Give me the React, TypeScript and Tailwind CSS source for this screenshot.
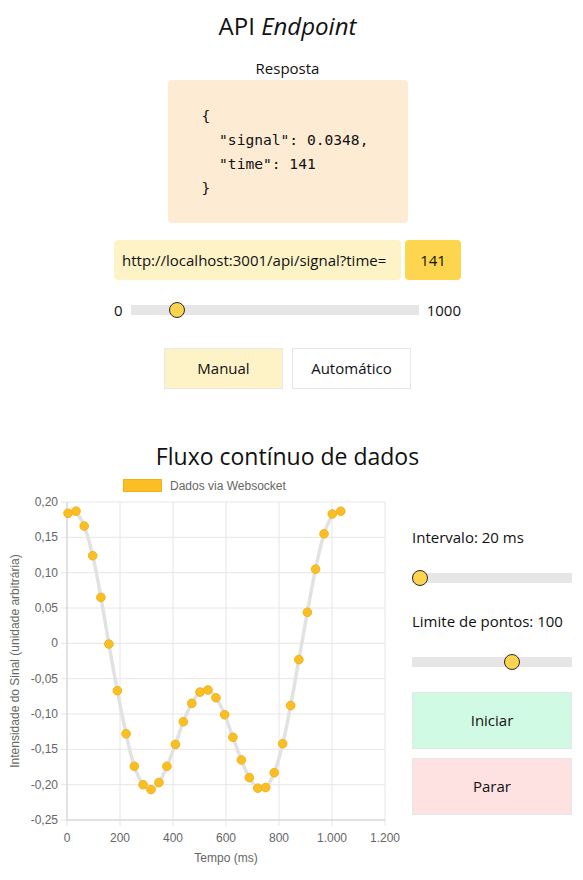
import React from 'react'

const sans = { fontFamily: '"Open Sans", "Noto Sans", sans-serif' }

const points: [number, number][] = [
  [4, 0.184], [34, 0.187], [65, 0.166], [97, 0.124], [128, 0.065], [158, -0.001],
  [190, -0.067], [223, -0.128], [254, -0.174], [287, -0.2], [317, -0.207], [347, -0.197],
  [377, -0.174], [409, -0.143], [439, -0.111], [471, -0.085], [502, -0.069], [532, -0.066],
  [562, -0.077], [595, -0.101], [626, -0.133], [658, -0.165], [688, -0.19], [720, -0.205],
  [750, -0.204], [782, -0.183], [814, -0.142], [844, -0.088], [875, -0.023], [907, 0.044],
  [938, 0.105], [970, 0.155], [1001, 0.183], [1033, 0.187],
]

const X0 = 67
const X1 = 385
const Y0 = 26 // 0.20
const Y1 = 344 // -0.25

const px = (t: number) => X0 + (t / 1200) * (X1 - X0)
const py = (v: number) => Y0 + ((0.2 - v) / 0.45) * (Y1 - Y0)

function smoothPath(pts: { x: number; y: number }[]) {
  const t = 0.4
  const cps = pts.map((cur, i) => {
    const prev = pts[i - 1] ?? cur
    const next = pts[i + 1] ?? cur
    const d01 = Math.hypot(cur.x - prev.x, cur.y - prev.y)
    const d12 = Math.hypot(next.x - cur.x, next.y - cur.y)
    const s01 = d01 + d12 === 0 ? 0 : d01 / (d01 + d12)
    const s12 = d01 + d12 === 0 ? 0 : d12 / (d01 + d12)
    return {
      p: { x: cur.x - t * s01 * (next.x - prev.x), y: cur.y - t * s01 * (next.y - prev.y) },
      n: { x: cur.x + t * s12 * (next.x - prev.x), y: cur.y + t * s12 * (next.y - prev.y) },
    }
  })
  let d = `M${pts[0].x},${pts[0].y}`
  for (let i = 1; i < pts.length; i++) {
    const a = cps[i - 1].n
    const b = cps[i].p
    d += ` C${a.x},${a.y} ${b.x},${b.y} ${pts[i].x},${pts[i].y}`
  }
  return d
}

const yTicks = ['0,20', '0,15', '0,10', '0,05', '0', '-0,05', '-0,10', '-0,15', '-0,20', '-0,25']
const xTicks = ['0', '200', '400', '600', '800', '1.000', '1.200']

function Chart() {
  const pts = points.map(([t, v]) => ({ x: px(t), y: py(v) }))
  const line = smoothPath(pts.slice(1, -1))
  const stepY = (Y1 - Y0) / 9
  const stepX = (X1 - X0) / 6
  return (
    <svg width="400" height="395" viewBox="0 0 400 395" className="block shrink-0">
      <g fontFamily='"Liberation Sans", Arial, sans-serif' fontSize="12" fill="#666">
        <rect x="123.5" y="3.5" width="38" height="12" fill="#fbbf24" stroke="#f0b116" strokeWidth="1" />
        <text x="170" y="14">Dados via Websocket</text>
        {yTicks.map((lab, i) => (
          <g key={lab}>
            <line x1="61" x2={X1} y1={Y0 + i * stepY} y2={Y0 + i * stepY} stroke="#e6e6e6" />
            <text x="58" y={Y0 + i * stepY + 4} textAnchor="end">{lab}</text>
          </g>
        ))}
        {xTicks.map((lab, i) => (
          <g key={lab}>
            <line x1={X0 + i * stepX} x2={X0 + i * stepX} y1={Y0} y2={Y1 + 6} stroke="#e6e6e6" />
            <text x={X0 + i * stepX} y={Y1 + 22} textAnchor="middle">{lab}</text>
          </g>
        ))}
        <line x1={X0} x2={X0} y1={Y0} y2={Y1} stroke="#d0d0d0" />
        <line x1={X0} x2={X1} y1={Y1} y2={Y1} stroke="#d0d0d0" />
        <text x="226" y="386" textAnchor="middle">Tempo (ms)</text>
        <text x="0" y="0" textAnchor="middle" transform="translate(19,185) rotate(-90)">
          Intensidade do Sinal (unidade arbitrária)
        </text>
      </g>
      <path d={line} fill="none" stroke="#e2e2e2" strokeWidth="3.5" strokeLinecap="round" />
      {pts.map((p, i) => (
        <circle key={i} cx={p.x} cy={p.y} r="4.3" fill="#fbbf24" stroke="#f2b21a" strokeWidth="1" />
      ))}
    </svg>
  )
}

function Slider({ pos, className = '' }: { pos: number; className?: string }) {
  return (
    <div className={`relative flex h-5 items-center ${className}`}>
      <div className="h-2.5 w-full bg-[#e6e6e6]" />
      <div
        className="absolute top-[2px] h-4 w-4 -translate-x-1/2 rounded-full border-[1.5px] border-[#2a2a2a] bg-[#fdd34f]"
        style={{ left: pos }}
      />
    </div>
  )
}

export default function App() {
  return (
    <div className="min-h-[880px] w-[583px] bg-white text-[#111]" style={sans}>
      <div className="w-[575px]">
        <h1 className="pt-[10px] text-center text-[24px] leading-8">
          API <em>Endpoint</em>
        </h1>
        <p className="mt-[15px] text-center text-[15px] leading-[23px]">Resposta</p>
        <pre
          className="mx-auto h-[143px] w-[240px] rounded bg-[#fdebd3] px-[34px] py-6 text-[14.6px] leading-6"
          style={{ fontFamily: '"DejaVu Sans Mono", monospace' }}
        >
          {'{\n  "signal": 0.0348,\n  "time": 141\n}'}
        </pre>

        <div className="mx-auto mt-[17px] flex w-[347px] gap-1">
          <div className="flex h-10 flex-1 items-center rounded bg-[#fef3c7] pl-2 text-[15px]">
            http://localhost:3001/api/signal?time=
          </div>
          <div className="flex h-10 w-14 items-center justify-center rounded bg-[#fdd54f] text-[15px]">141</div>
        </div>

        <div className="mx-auto mt-[19px] flex h-[22px] w-[347px] items-center text-[15px]">
          <span className="w-[17px]">0</span>
          <Slider pos={46} className="flex-1" />
          <span className="pl-2">1000</span>
        </div>

        <div className="mt-[27px] flex justify-center gap-[9px] text-[15px]">
          <button className="h-[41px] w-[119px] border border-[#e5e7eb] bg-[#fef3c7]">Manual</button>
          <button className="h-[41px] w-[119px] border border-[#e5e7eb] bg-white">Automático</button>
        </div>

        <h2 className="mt-[51px] text-center text-[23px] leading-8">Fluxo contínuo de dados</h2>
      </div>

      <div className="mt-1 flex">
        <Chart />
        <div className="ml-3 w-[160px] text-[15px]">
          <p className="mt-[49px] leading-6">Intervalo: 20 ms</p>
          <Slider pos={8} className="mt-[19px]" />
          <p className="mt-[21px] leading-6">Limite de pontos: 100</p>
          <Slider pos={100} className="mt-[19px]" />
          <button className="mt-5 h-[57px] w-full border border-[#e5e7eb] bg-[#d1fae5]">Iniciar</button>
          <button className="mt-[9px] h-[57px] w-full border border-[#e5e7eb] bg-[#fee2e2]">Parar</button>
        </div>
      </div>
    </div>
  )
}
